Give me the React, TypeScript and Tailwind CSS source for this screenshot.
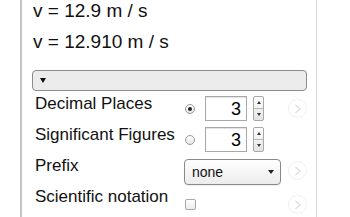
function Chevron() {
  return (
    <div className="ml-auto flex h-[19px] w-[19px] items-center justify-center rounded-full border border-[#f0f0f0] bg-white">
      <svg width="8" height="10" viewBox="0 0 8 10">
        <path d="M2 1.5 L6 5 L2 8.5" fill="none" stroke="#dedede" strokeWidth="1.6" strokeLinecap="round" strokeLinejoin="round" />
      </svg>
    </div>
  )
}

function Radio({ checked }: { checked?: boolean }) {
  return (
    <div className="flex h-[10px] w-[10px] items-center justify-center rounded-full border border-[#9a9a9a] bg-gradient-to-b from-white to-[#e6e6e6]">
      {checked && <div className="h-[4px] w-[4px] rounded-full bg-[#222]" />}
    </div>
  )
}

function NumberBox({ value }: { value: string }) {
  return (
    <div className="flex items-center gap-[6px]">
      <div className="flex h-[25px] w-[42px] items-center justify-end border border-[#a8a8a8] pr-[5px] text-[18px] leading-none text-black shadow-[inset_0_1px_1px_rgba(0,0,0,0.12)]">
        {value}
      </div>
      <div className="flex h-[25px] w-[11px] flex-col overflow-hidden rounded-[2px] border border-[#a8a8a8] bg-gradient-to-b from-white to-[#e4e4e4]">
        <div className="flex flex-1 items-center justify-center border-b border-[#b8b8b8]">
          <svg width="4" height="3" viewBox="0 0 4 3"><path d="M0 3 L2 0 L4 3 Z" fill="#333" /></svg>
        </div>
        <div className="flex flex-1 items-center justify-center">
          <svg width="4" height="3" viewBox="0 0 4 3"><path d="M0 0 L4 0 L2 3 Z" fill="#333" /></svg>
        </div>
      </div>
    </div>
  )
}

export default function App() {
  return (
    <div className="flex h-[217px] w-[350px] overflow-hidden bg-white font-['Liberation_Sans',Arial,sans-serif] text-[#111]">
      <div className="ml-[20px] h-full w-[297px] border-l-2 border-r border-l-[#c4c4c4] border-r-[#d8d8d8]">
        <div className="mt-[-5px] pl-[11px] text-[19px] leading-[31px]">
          <div>v = 12.9 m / s</div>
          <div>v = 12.910 m / s</div>
        </div>

        <div className="ml-[10px] mt-[13px] flex h-[21px] w-[275px] items-center rounded-[4px] border border-[#8c8c8c] bg-[#ececec] pl-[7px]">
          <svg width="6" height="5" viewBox="0 0 6 5"><path d="M0 0 L6 0 L3 5 Z" fill="#111" /></svg>
        </div>

        <div className="mt-[2px] pl-[13px] pr-[9px] text-[17px] leading-[20px]">
          <div className="flex h-[31px] items-center">
            <div className="w-[150px] self-start pt-[1px]">Decimal Places</div>
            <Radio checked />
            <div className="ml-[10px]"><NumberBox value="3" /></div>
            <Chevron />
          </div>
          <div className="flex h-[31px] items-center">
            <div className="w-[150px] self-start whitespace-nowrap pt-[1px]">Significant Figures</div>
            <Radio />
            <div className="ml-[10px]"><NumberBox value="3" /></div>
          </div>
          <div className="flex h-[31px] items-center">
            <div className="w-[149px] self-start pt-[1px]">Prefix</div>
            <div className="mt-[2px] flex h-[26px] w-[97px] items-center justify-between rounded-[4px] border border-[#8a8a8a] bg-gradient-to-b from-white to-[#ececec] pl-[7px] pr-[6px] text-[14px] shadow-[0_1px_1px_rgba(0,0,0,0.08)]">
              <span>none</span>
              <svg width="6" height="4" viewBox="0 0 6 4"><path d="M0 0 L6 0 L3 4 Z" fill="#222" /></svg>
            </div>
            <Chevron />
          </div>
          <div className="flex h-[31px] items-center">
            <div className="w-[150px] self-start whitespace-nowrap pt-[1px]">Scientific notation</div>
            <div className="mt-[6px] h-[11px] w-[11px] rounded-[2px] border border-[#a8a8a8] bg-gradient-to-b from-white to-[#ececec]" />
            <div className="mt-[6px] ml-auto"><Chevron /></div>
          </div>
        </div>
      </div>
    </div>
  )
}
